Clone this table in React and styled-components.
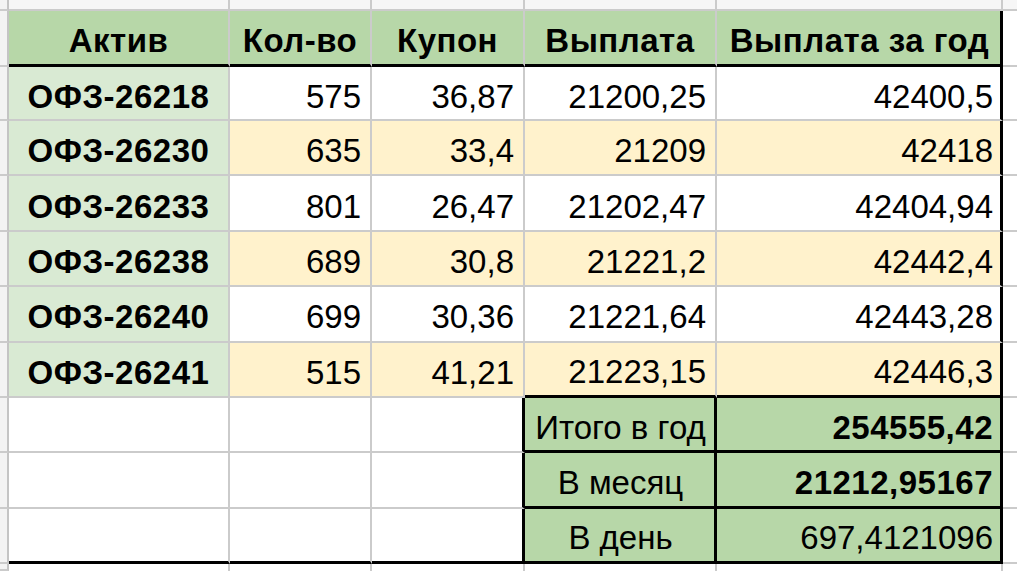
import React from "react"
import styled, { createGlobalStyle } from "styled-components"

const GlobalStyle = createGlobalStyle`
    html, body {
        margin: 0;
        padding: 0;
        background: #ffffff;
        overflow: hidden;
    }
`

const GRID = "#cbcbcb"
const BLACK = "#000000"

const Sheet = styled.div`
    width: 1017px;
    height: 571px;

    display: grid;
    grid-template-columns: 9px 221px 142px 153px 192px 286px 1fr;
    grid-template-rows: 11px 56px 54px repeat(8, 55.4px) 1fr;

    font-family: "Liberation Sans", Arial, sans-serif;
    font-size: 33px;
    color: #000;
`

const Cell = styled.div`
    box-sizing: border-box;
    padding: 7px ${props => props.$right === "black" ? "7px" : "9px"} 0 9px;

    display: flex;
    align-items: center;
    justify-content: ${props => props.$align === "right" ? "flex-end" : "center"};

    background: ${props => props.$bg || "#ffffff"};
    font-weight: ${props => props.$bold ? 700 : 400};
    letter-spacing: ${props => props.$bold ? "0.5px" : "0"};
    white-space: nowrap;
    overflow: hidden;

    border-right: ${props => props.$right === "black" ? `3px solid ${BLACK}` : `2px solid ${GRID}`};
    border-bottom: ${props => props.$bottom === "black" ? `3px solid ${BLACK}` : `2px solid ${GRID}`};
`

const Gutter = styled.div`
    box-sizing: border-box;
    background: #f3f3f3;
    border-right: 2px solid #c4c4c4;
    border-bottom: 2px solid ${GRID};
`

const TopStrip = styled.div`
    box-sizing: border-box;
    background: #f6f6f6;
    border-right: 2px solid ${GRID};
    border-bottom: 2px solid ${GRID};
`

const Tail = styled.div`
    box-sizing: border-box;
    background: #ffffff;
    border-right: 2px solid ${GRID};
`

const HEAD_GREEN = "#b7d7a8"
const LIGHT_GREEN = "#d9ead3"
const YELLOW = "#fff2cc"

const headers = ["Актив", "Кол-во", "Купон", "Выплата", "Выплата за год"]

const bonds = [
    ["ОФЗ-26218", "575", "36,87", "21200,25", "42400,5"],
    ["ОФЗ-26230", "635", "33,4", "21209", "42418"],
    ["ОФЗ-26233", "801", "26,47", "21202,47", "42404,94"],
    ["ОФЗ-26238", "689", "30,8", "21221,2", "42442,4"],
    ["ОФЗ-26240", "699", "30,36", "21221,64", "42443,28"],
    ["ОФЗ-26241", "515", "41,21", "21223,15", "42446,3"],
]

const totals = [
    { label: "Итого в год", value: "254555,42", bold: true },
    { label: "В месяц", value: "21212,95167", bold: true },
    { label: "В день", value: "697,4121096", bold: false },
]

const App = () => {
    return (
        <>
            <GlobalStyle />
            <Sheet>
                <Gutter />
                {headers.map((h, i) => <TopStrip key={`top-${i}`} />)}
                <TopStrip />

                <Gutter />
                {headers.map((h, i) => (
                    <Cell
                        key={h}
                        $bg={HEAD_GREEN}
                        $bold
                        $bottom="black"
                        $right={i === 4 ? "black" : undefined}
                        children={h}
                    />
                ))}
                <Cell />

                {bonds.map((row, r) => {
                    const bg = r % 2 === 1 ? YELLOW : "#ffffff"
                    const lastBond = r === bonds.length - 1
                    return (
                        <React.Fragment key={row[0]}>
                            <Gutter />
                            <Cell $bg={LIGHT_GREEN} $bold children={row[0]} />
                            {row.slice(1).map((v, c) => (
                                <Cell
                                    key={`${row[0]}-${c}`}
                                    $bg={bg}
                                    $align="right"
                                    $right={c === 3 ? "black" : undefined}
                                    $bottom={lastBond && c >= 2 ? "black" : undefined}
                                    children={v}
                                />
                            ))}
                            <Cell />
                        </React.Fragment>
                    )
                })}

                {totals.map((t, r) => {
                    const last = r === totals.length - 1
                    return (
                        <React.Fragment key={t.label}>
                            <Gutter />
                            <Cell $bottom={last ? "black" : undefined} />
                            <Cell $bottom={last ? "black" : undefined} />
                            <Cell $right="black" $bottom={last ? "black" : undefined} />
                            <Cell $bg={HEAD_GREEN} $right="black" $bottom="black" children={t.label} />
                            <Cell
                                $bg={HEAD_GREEN}
                                $align="right"
                                $bold={t.bold}
                                $right="black"
                                $bottom="black"
                                children={t.value}
                            />
                            <Cell />
                        </React.Fragment>
                    )
                })}

                <Gutter />
                {headers.map((h, i) => <Tail key={`tail-${i}`} />)}
                <Tail />
            </Sheet>
        </>
    )
}

export default App
